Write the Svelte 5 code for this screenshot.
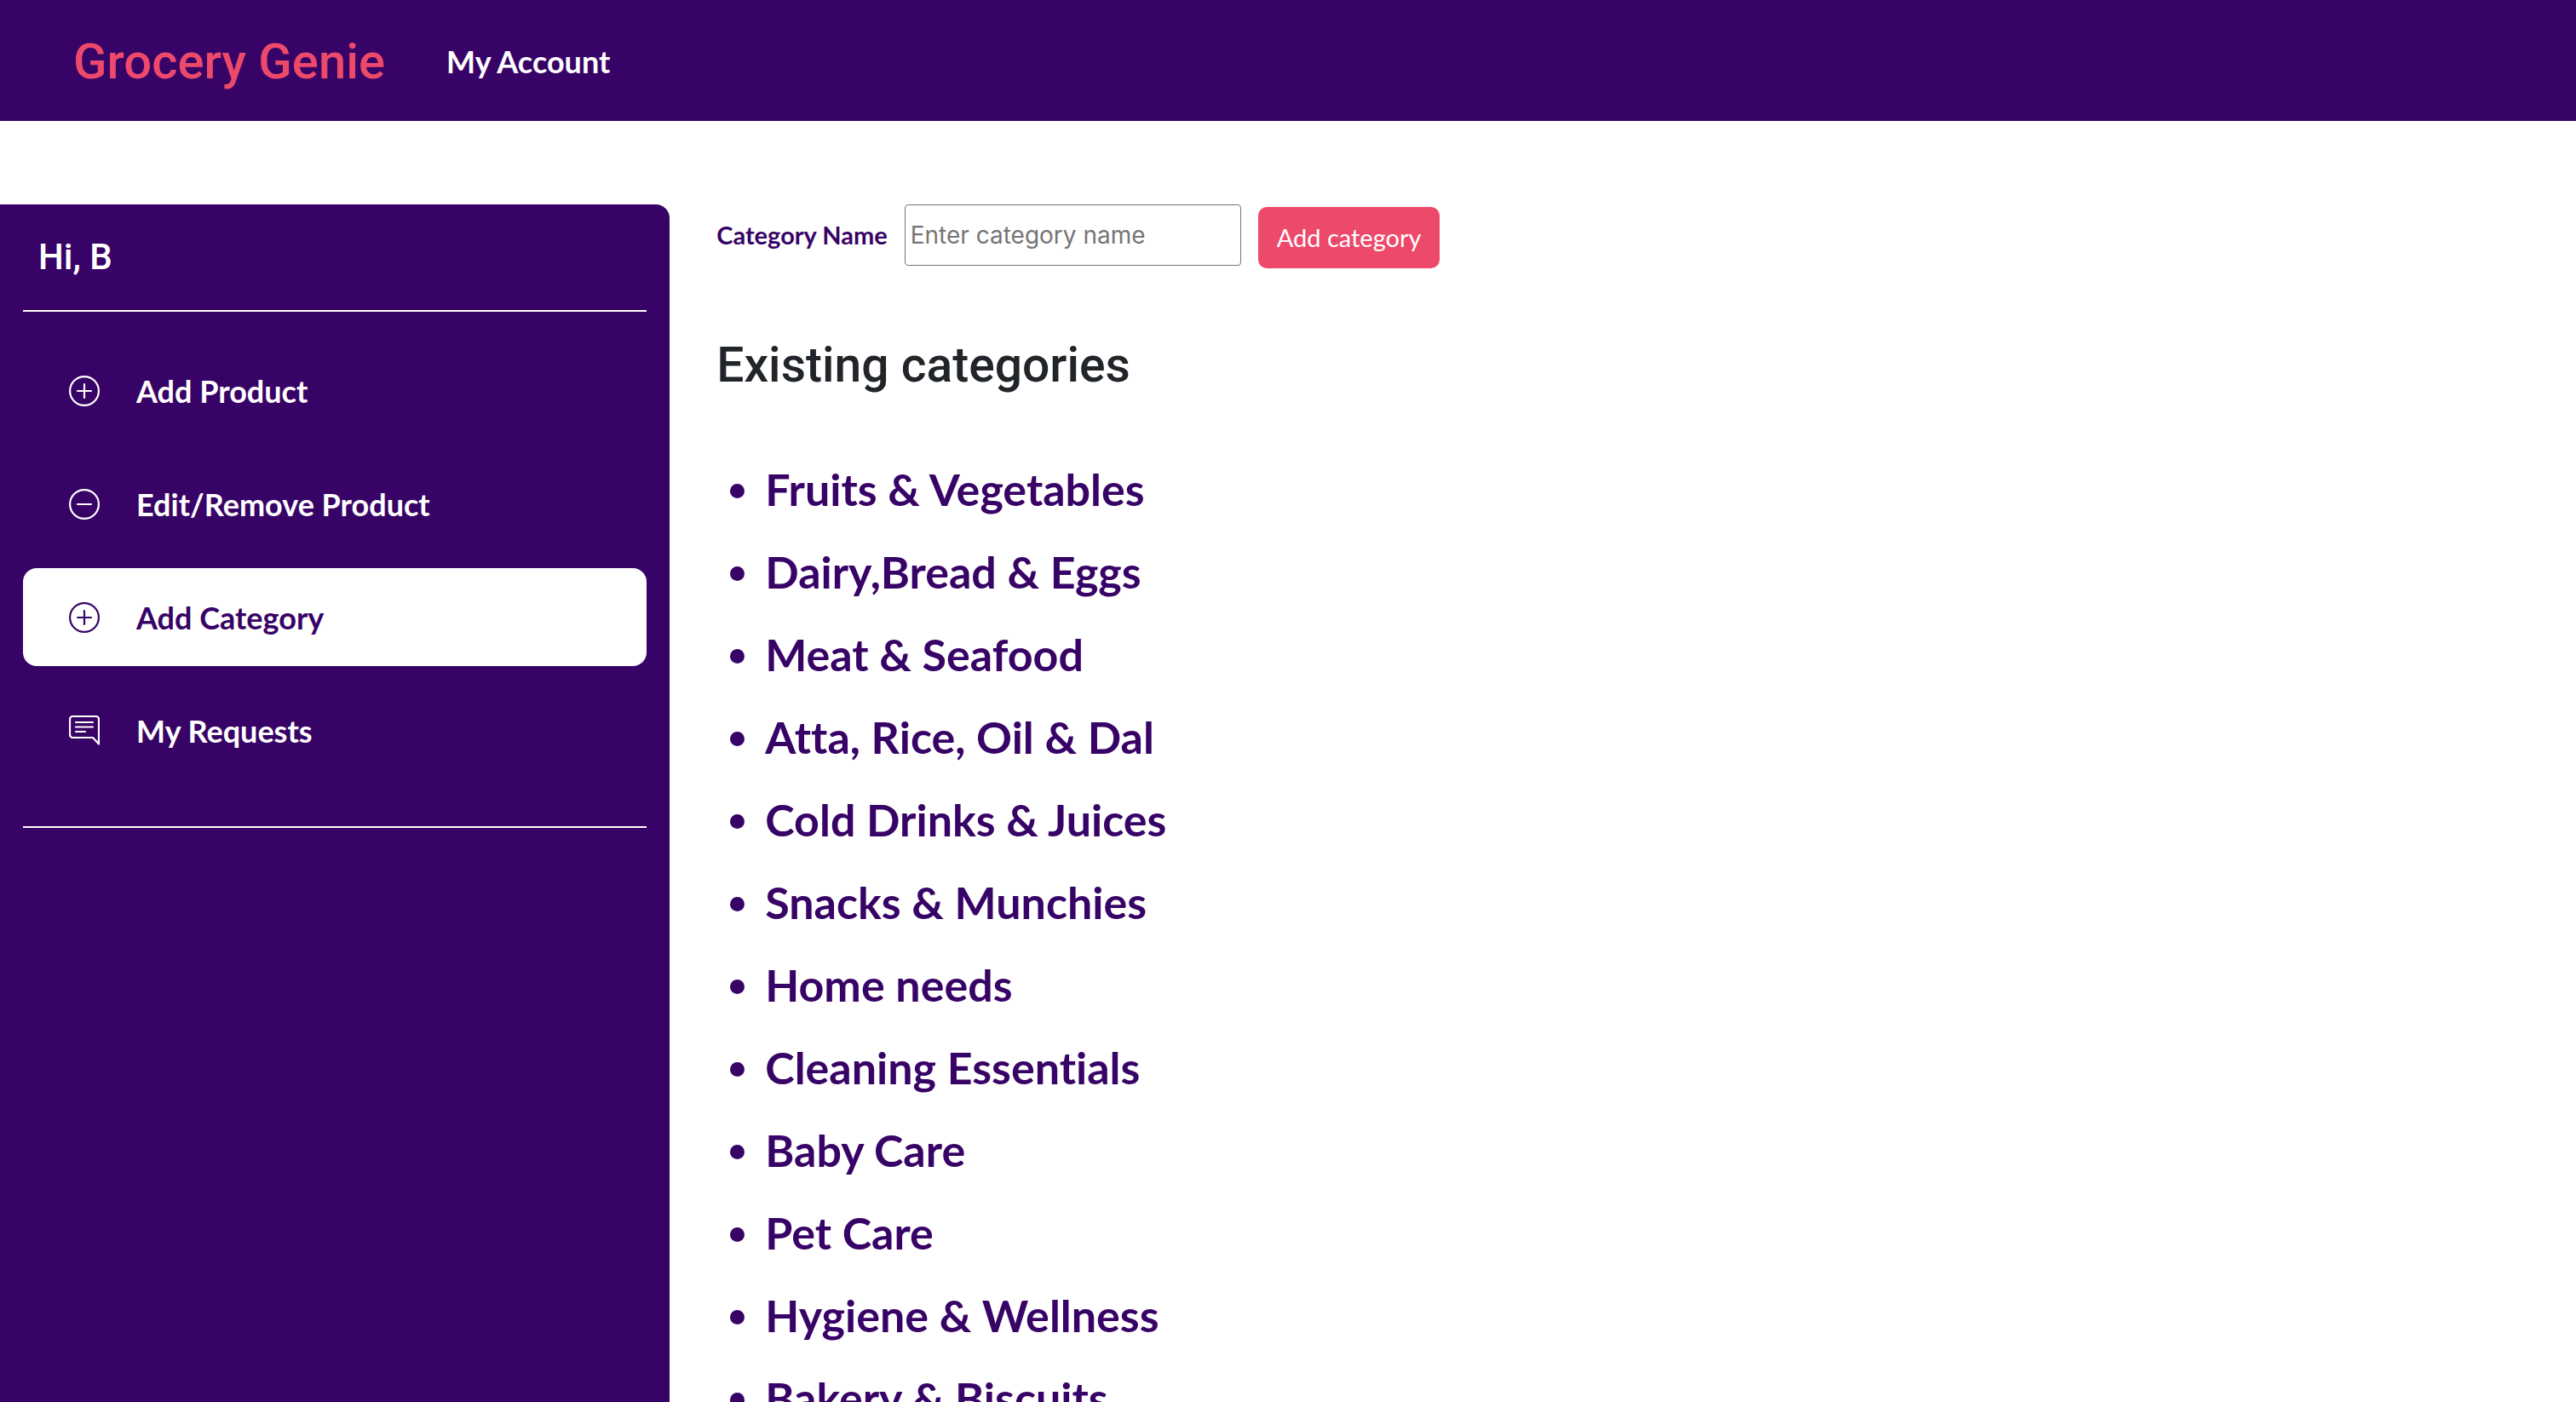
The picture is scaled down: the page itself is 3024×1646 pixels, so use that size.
<script>
  const menu = [
    { label: 'Add Product', icon: 'plus' },
    { label: 'Edit/Remove Product', icon: 'minus' },
    { label: 'Add Category', icon: 'plus', active: true },
    { label: 'My Requests', icon: 'message' }
  ];

  const categories = [
    'Fruits & Vegetables',
    'Dairy,Bread & Eggs',
    'Meat & Seafood',
    'Atta, Rice, Oil & Dal',
    'Cold Drinks & Juices',
    'Snacks & Munchies',
    'Home needs',
    'Cleaning Essentials',
    'Baby Care',
    'Pet Care',
    'Hygiene & Wellness',
    'Bakery & Biscuits'
  ];
</script>

<div class="page">
  <header>
    <a class="brand" href="#home">Grocery Genie</a>
    <a class="account" href="#account">My Account</a>
  </header>

  <div class="body">
    <aside>
      <p class="greeting">Hi, B</p>
      <nav>
        {#each menu as item}
          <a class="item" class:active={item.active} href="#menu" aria-current={item.active ? 'page' : undefined}>
            <svg viewBox="0 0 36 36" fill="none" stroke="currentColor" stroke-width="2.2" stroke-linecap="round" aria-hidden="true">
              {#if item.icon === 'message'}
                <path stroke-linejoin="round" d="M4.500 1H31.500A3.500 3.500 0 0 1 35 4.500V33.500L28 26H4.500A3.500 3.500 0 0 1 1 22.500V4.500A3.500 3.500 0 0 1 4.500 1Z" />
                <path d="M8 8H28M8 13.500H28M8 19H19" />
              {:else}
                <circle cx="18" cy="18" r="16.900" />
                <path d="M10 18H26" />
                {#if item.icon === 'plus'}<path d="M18 10V26" />{/if}
              {/if}
            </svg>
            <span>{item.label}</span>
          </a>
        {/each}
      </nav>
    </aside>

    <main>
      <form onsubmit={(e) => e.preventDefault()}>
        <label for="category">Category Name</label>
        <input id="category" type="text" placeholder="Enter category name" />
        <button type="submit">Add category</button>
      </form>
      <h2>Existing categories</h2>
      <ul>
        {#each categories as category}
          <li>{category}</li>
        {/each}
      </ul>
    </main>
  </div>
</div>

<style>
  :global(body) {
    margin: 0;
    background: #fff;
  }
  .page {
    height: 100vh;
    display: flex;
    flex-direction: column;
    overflow: hidden;
    font-family: Lato, sans-serif;
    font-variant-ligatures: none;
    color: #380366;
  }
  .page * {
    box-sizing: border-box;
  }
  header {
    flex: none;
    display: flex;
    align-items: center;
    gap: 72px;
    height: 142px;
    padding: 2px 86px 0;
    background: #380366;
  }
  header a {
    text-decoration: none;
  }
  .brand {
    font: 500 58px/84px Roboto, sans-serif;
    color: #ed496b;
  }
  .account {
    font-size: 36px;
    line-height: 54px;
    font-weight: 700;
    color: #fff;
  }
  .body {
    flex: 1;
    min-height: 0;
    display: flex;
    gap: 55px;
    padding-top: 98px;
  }
  aside {
    flex: none;
    width: 26%;
    padding: 0 27px;
    border-top-right-radius: 16px;
    background: #380366;
    color: #fff;
  }
  .greeting {
    margin: 0;
    padding: 36px 18px;
    border-bottom: 2px solid #fff;
    font: 500 42px/52px Roboto, sans-serif;
  }
  nav {
    display: flex;
    flex-direction: column;
    gap: 18px;
    padding: 35px 0 55px;
    border-bottom: 2px solid #fff;
  }
  .item {
    display: flex;
    align-items: center;
    gap: 43px;
    height: 115px;
    padding: 0 54px;
    border-radius: 16px;
    color: #fff;
    font-size: 36px;
    line-height: 54px;
    font-weight: 700;
    text-decoration: none;
  }
  .item.active {
    background: #fff;
    color: #380366;
  }
  .item svg {
    flex: none;
    width: 36px;
    height: 36px;
  }
  main {
    flex: 1;
    min-width: 0;
  }
  form {
    display: flex;
    align-items: flex-start;
    gap: 20px;
    height: 75px;
  }
  label {
    font-size: 29px;
    line-height: 72px;
    font-weight: 700;
  }
  input {
    width: 395px;
    height: 72px;
    padding: 0 6px;
    border: 1px solid #767676;
    border-radius: 4px;
    font: 400 28px/42px Inter, sans-serif;
    color: #222;
  }
  input::placeholder {
    color: #757575;
    opacity: 1;
  }
  button {
    align-self: flex-end;
    height: 72px;
    padding: 0 22px;
    border: 0;
    border-radius: 10px;
    background: #ed496b;
    color: #fff;
    font: 400 29px/42px Lato, sans-serif;
    font-variant-ligatures: none;
  }
  h2 {
    margin: 80px 0 0;
    font: 500 57px/68px Roboto, sans-serif;
    color: #212529;
  }
  ul {
    margin: 63px 0 0;
    padding-left: 57px;
    font-size: 52px;
    font-weight: 700;
    line-height: 97px;
  }
</style>
